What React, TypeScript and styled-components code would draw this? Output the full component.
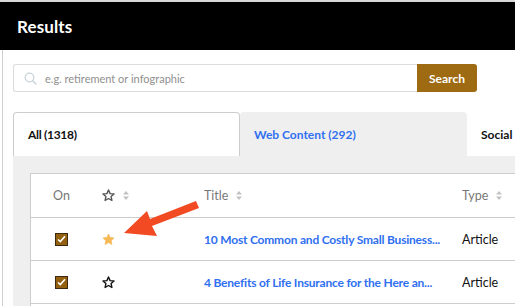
import React from "react";
import styled, { createGlobalStyle } from "styled-components";

const Global = createGlobalStyle`
  html, body { margin: 0; padding: 0; background: #fff; overflow: hidden; }
  body { font-family: "Lato", "Liberation Sans", sans-serif; -webkit-font-smoothing: antialiased; }
  * { box-sizing: border-box; }
`;

const Page = styled.div`
  width: 515px;
  height: 306px;
  position: relative;
  overflow: hidden;
`;

const Header = styled.div`
  height: 50px;
  background: #000;
  border-top: 2px solid #d8d8d8;
  display: flex;
  align-items: center;
  padding: 1px 0 0 17px;
`;

const HeaderTitle = styled.h1`
  margin: 0;
  color: #fff;
  font-size: 17px;
  font-weight: 700;
  letter-spacing: 0.1px;
`;

const Body = styled.div`
  margin-left: 2px;
  border-left: 1px solid #cfcfcf;
  padding: 14px 0 0 10px;
  height: 256px;
  display: flex;
  flex-direction: column;
`;

const SearchRow = styled.div`
  display: flex;
  width: 464px;
  height: 28px;
  flex-shrink: 0;
`;

const InputBox = styled.div`
  flex: 1;
  display: flex;
  align-items: center;
  gap: 8px;
  padding-left: 10px;
  border: 1px solid #dcdcdc;
  border-right: none;
  border-radius: 3px 0 0 3px;
  color: #8f8f8f;
  font-size: 11px;
`;

const SearchButton = styled.button`
  width: 60px;
  border: none;
  border-radius: 0 3px 3px 0;
  background: #9e6a12;
  color: #fff;
  font-family: inherit;
  font-weight: 700;
  font-size: 12px;
  padding: 0;
`;

const Tabs = styled.div`
  display: flex;
  margin-top: 20px;
  height: 44px;
  flex-shrink: 0;
`;

const Tab = styled.div<{ $variant: "active" | "muted" | "plain" }>`
  width: ${(p) => (p.$variant === "plain" ? "60px" : "227px")};
  flex-shrink: 0;
  display: flex;
  align-items: center;
  padding-left: 14px;
  font-size: 12px;
  font-weight: 700;
  letter-spacing: ${(p) => (p.$variant === "active" ? "-0.3px" : "0")};
  background: ${(p) => (p.$variant === "muted" ? "#efefef" : "#fff")};
  color: ${(p) => (p.$variant === "muted" ? "#2f6ff0" : "#111")};
  border: ${(p) => (p.$variant === "active" ? "1px solid #cdcdcd" : "none")};
  border-bottom: none;
  border-radius: 4px 4px 0 0;
`;

const Panel = styled.div`
  background: #efefef;
  padding: 17px 0 0 17px;
  flex: 1;
`;

const Card = styled.div`
  background: #fff;
  border: 1px solid #cdcdcd;
  border-right: none;
  height: 200px;
`;

const Row = styled.div<{ $head?: boolean }>`
  display: grid;
  grid-template-columns: 71px 102px 258px 1fr;
  align-items: center;
  height: ${(p) => (p.$head ? "44px" : "43px")};
  border-bottom: 1px solid #cdcdcd;
  font-size: 12.5px;
`;

const Cell = styled.div<{ $first?: boolean }>`
  display: flex;
  align-items: center;
  gap: 8px;
  padding-left: ${(p) => (p.$first ? "22px" : "0")};
  white-space: nowrap;
  overflow: hidden;
`;

const HeadText = styled.span`
  color: #777;
  font-weight: 400;
`;

const TitleLink = styled.a`
  color: #2f6ff0;
  font-weight: 700;
  font-size: 12px;
  letter-spacing: -0.2px;
  text-decoration: none;
`;

const TypeText = styled.span`
  color: #111;
  font-weight: 400;
`;

const Check = styled.span`
  width: 13px;
  height: 13px;
  margin-left: 2px;
  background: #93600f;
  border: 1px solid #3b2a10;
  display: flex;
  align-items: center;
  justify-content: center;
`;

const Arrow = styled.svg`
  position: absolute;
  left: 0;
  top: 0;
  pointer-events: none;
`;

const SortIcon = () => (
  <svg width="6" height="9" viewBox="0 0 6 9">
    <path d="M3 0 L6 3.5 H0 Z M3 9 L6 5.5 H0 Z" fill="#c2c2c2" />
  </svg>
);

const starPath =
  "M6.5 1 L8.1 4.6 L12 5 L9.1 7.6 L9.9 11.5 L6.5 9.5 L3.1 11.5 L3.9 7.6 L1 5 L4.9 4.6 Z";

const Star = ({ filled, color }: { filled?: boolean; color: string }) => (
  <svg width="13" height="13" viewBox="0 0 13 13">
    <path
      d={starPath}
      fill={filled ? color : "none"}
      stroke={color}
      strokeWidth={filled ? 0.8 : 1.4}
      strokeLinejoin="round"
    />
  </svg>
);

const CheckBox = () => (
  <Check>
    <svg width="9" height="8" viewBox="0 0 9 8">
      <path d="M1 4.5 L3.3 6.6 L8 1.2" fill="none" stroke="#fff" strokeWidth="1.6" />
    </svg>
  </Check>
);

const SearchIcon = () => (
  <svg width="13" height="13" viewBox="0 0 13 13">
    <circle cx="5.5" cy="5.5" r="4.3" fill="none" stroke="#c9d3d8" strokeWidth="1.3" />
    <path d="M8.7 8.7 L12 12" stroke="#c9d3d8" strokeWidth="1.4" strokeLinecap="round" />
  </svg>
);

const rows = [
  { starred: true, title: "10 Most Common and Costly Small Business...", type: "Article" },
  { starred: false, title: "4 Benefits of Life Insurance for the Here an...", type: "Article" },
];

export default function App() {
  return (
    <Page>
      <Global />
      <Header>
        <HeaderTitle>Results</HeaderTitle>
      </Header>
      <Body>
        <SearchRow>
          <InputBox>
            <SearchIcon />
            <span>e.g. retirement or infographic</span>
          </InputBox>
          <SearchButton>Search</SearchButton>
        </SearchRow>
        <Tabs>
          <Tab $variant="active">All (1318)</Tab>
          <Tab $variant="muted">Web Content (292)</Tab>
          <Tab $variant="plain">Social</Tab>
        </Tabs>
        <Panel>
          <Card>
            <Row $head>
              <Cell $first>
                <HeadText>On</HeadText>
              </Cell>
              <Cell>
                <Star color="#555" />
                <SortIcon />
              </Cell>
              <Cell>
                <HeadText>Title</HeadText>
                <SortIcon />
              </Cell>
              <Cell>
                <HeadText>Type</HeadText>
                <SortIcon />
              </Cell>
            </Row>
            {rows.map((r) => (
              <Row key={r.title}>
                <Cell $first>
                  <CheckBox />
                </Cell>
                <Cell>
                  {r.starred ? <Star filled color="#f7b955" /> : <Star color="#111" />}
                </Cell>
                <Cell>
                  <TitleLink href="#">{r.title}</TitleLink>
                </Cell>
                <Cell>
                  <TypeText>{r.type}</TypeText>
                </Cell>
              </Row>
            ))}
          </Card>
        </Panel>
      </Body>
      <Arrow width="515" height="306" viewBox="0 0 515 306">
        <path
          d="M196 201 L199 208 L152 226 L157 236 L124 233 L147 211 L150 219 Z"
          fill="#f24a22"
        />
      </Arrow>
    </Page>
  );
}
